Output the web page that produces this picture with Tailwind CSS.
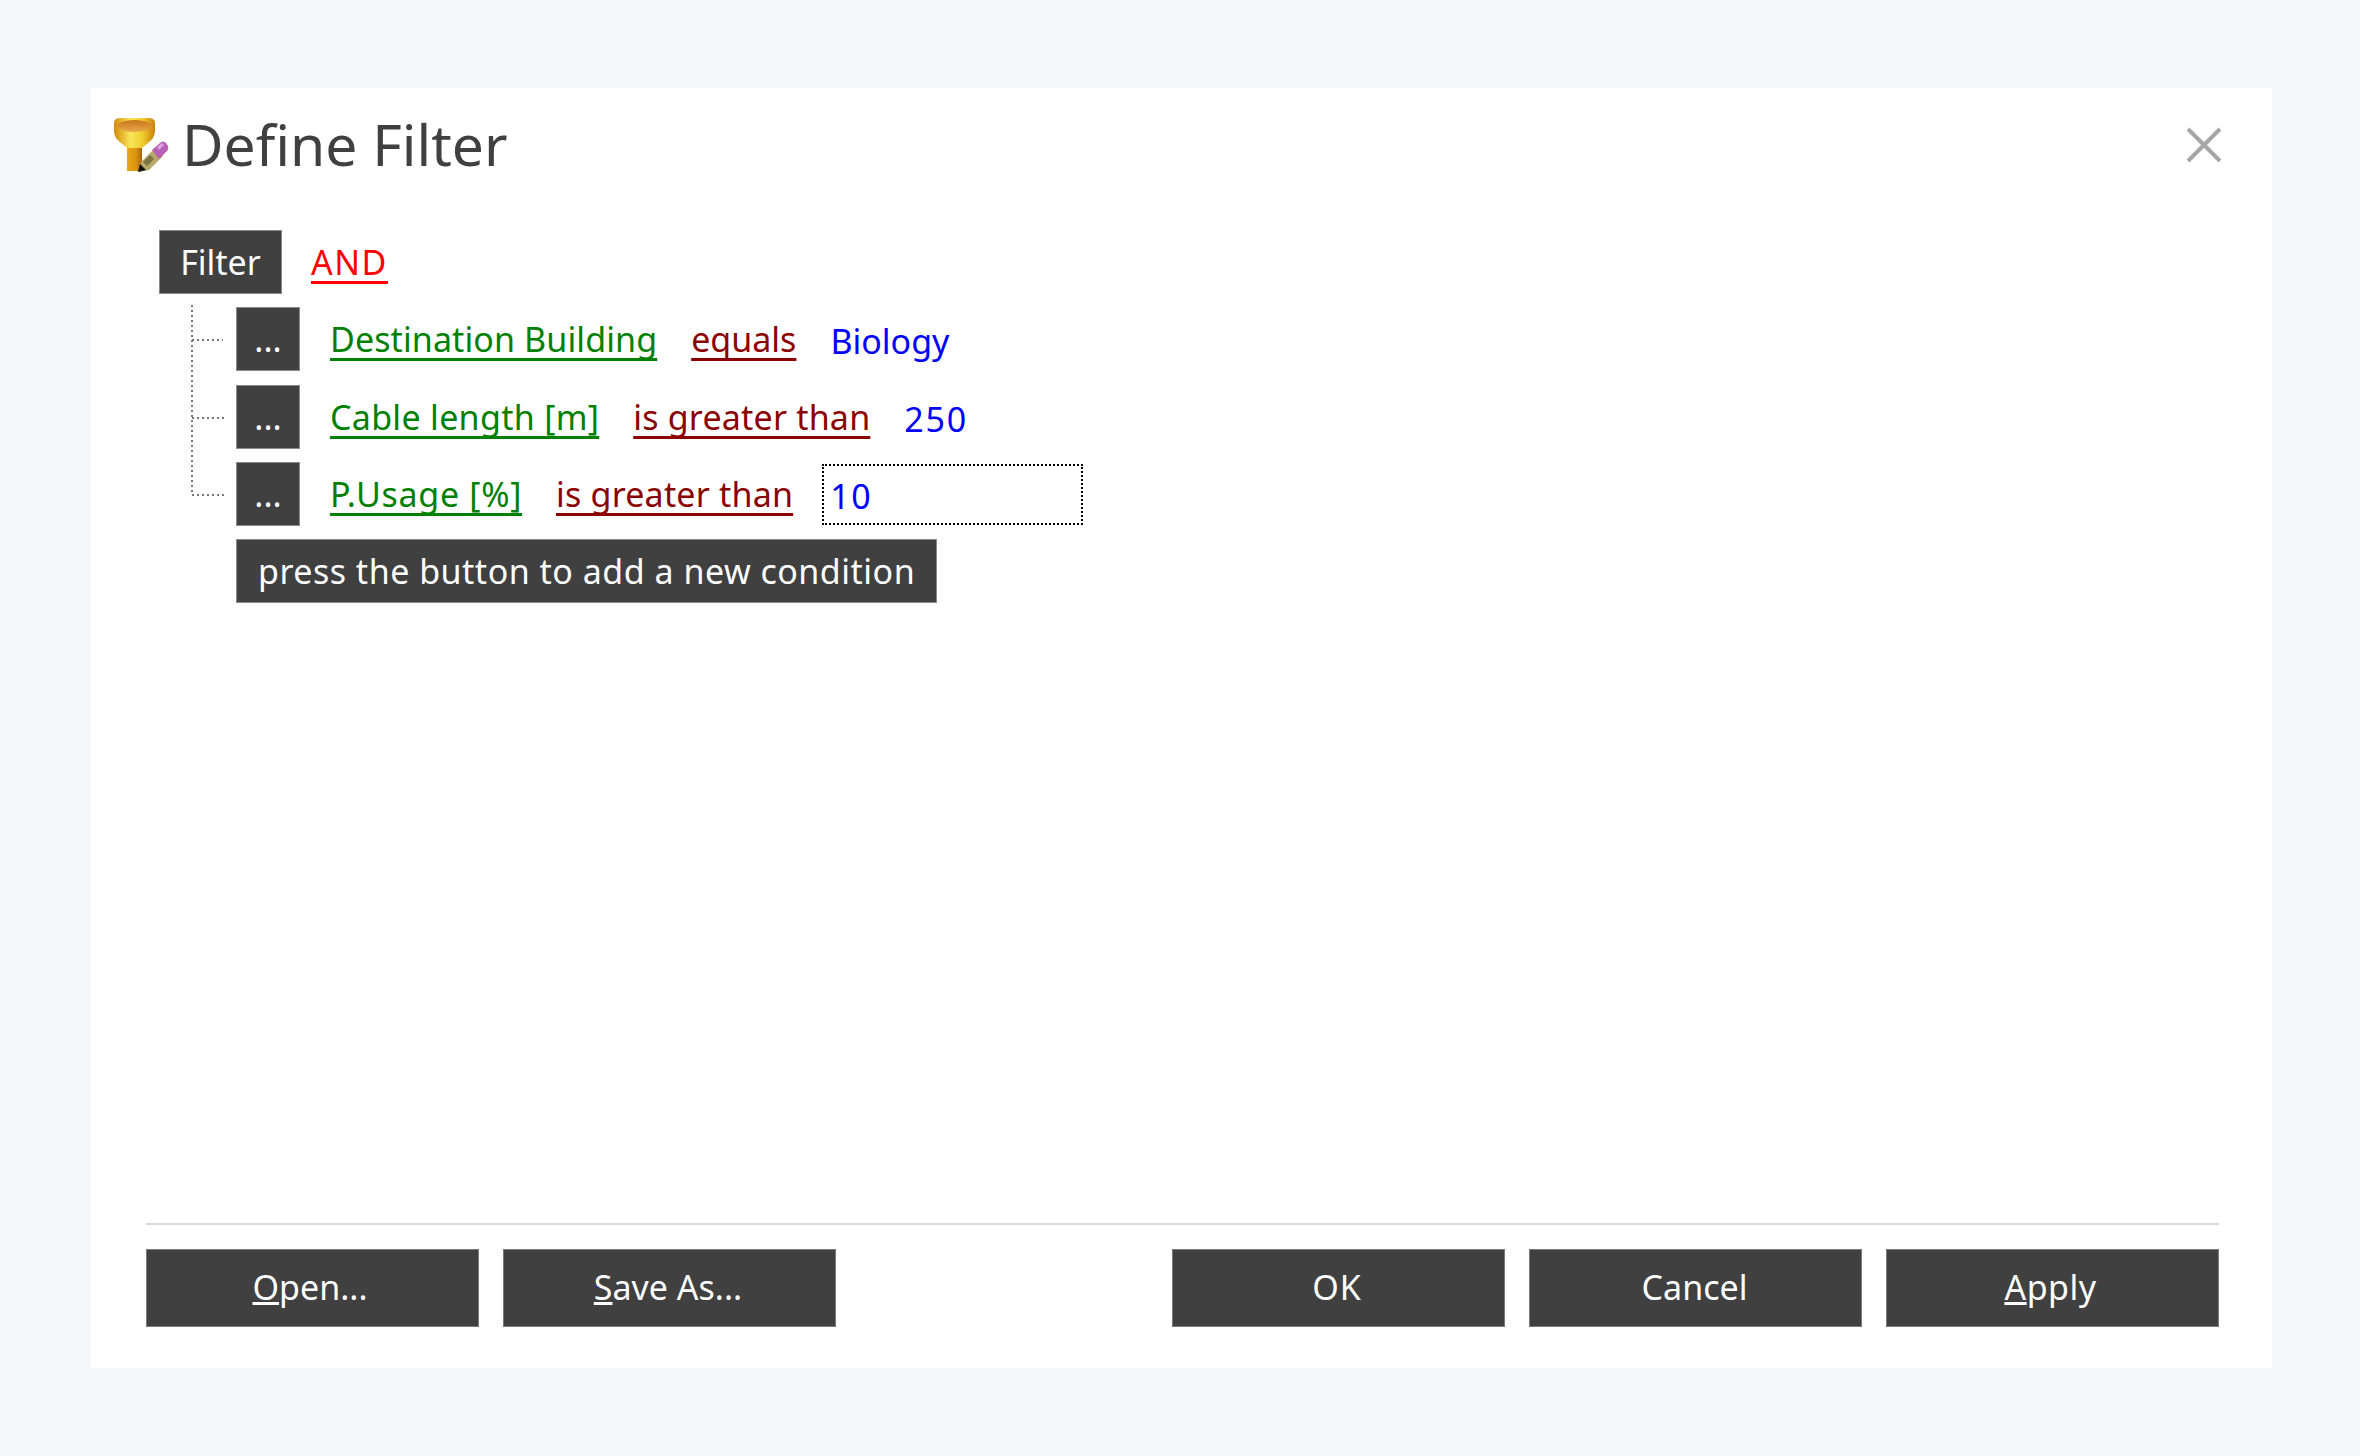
<!DOCTYPE html>
<html lang="en">
  <head>
    <meta charset="UTF-8" />
    <title>Define Filter</title>
    <script src="https://cdn.jsdelivr.net/npm/@tailwindcss/browser@4"></script>
  </head>
  <body class="bg-[#f4f6fa] min-h-screen pt-[88px] pl-[90px] font-['Noto_Sans','Open_Sans',sans-serif]">
    <div class="bg-white w-[2182px] h-[1280px] flex flex-col">
      <!-- title bar -->
      <div class="flex items-center h-[114px] pl-[23px] pr-[50px] shrink-0">
        <svg class="w-[56px] h-[56px] shrink-0 blur-[0.6px]" viewBox="0 0 56 56">
          <defs>
            <linearGradient id="funnel" x1="0" y1="0" x2="1" y2="0">
              <stop offset="0" stop-color="#d4890a" />
              <stop offset="0.4" stop-color="#f8e65a" />
              <stop offset="0.7" stop-color="#f0cc2c" />
              <stop offset="1" stop-color="#c9800a" />
            </linearGradient>
            <linearGradient id="stem" x1="0" y1="0" x2="1" y2="0">
              <stop offset="0" stop-color="#e8a818" />
              <stop offset="0.6" stop-color="#dc9410" />
              <stop offset="1" stop-color="#a8640a" />
            </linearGradient>
            <linearGradient id="rim" x1="0" y1="0" x2="0" y2="1">
              <stop offset="0" stop-color="#c8741c" />
              <stop offset="1" stop-color="#e8a848" />
            </linearGradient>
          </defs>
          <path d="M1 6 Q1 1 8 1 H35 Q42 1 42 6 V14 Q42 21 35 26 L29 31 V54 H14 V31 L8 26 Q1 21 1 14 Z" fill="url(#funnel)" />
          <path d="M14 31 H29 V54 H14 Z" fill="url(#stem)" />
          <ellipse cx="21.5" cy="9" rx="17" ry="6" fill="url(#rim)" />
          <path d="M25 55 L28 45 L42 31 L50 39 L36 53 Z" fill="#b8a868" />
          <path d="M25 55 L27 47 L33 53 Z" fill="#111" />
          <path d="M39 33 L47 26 Q50 23 53 26 L55 29 Q56 32 54 34 L46 42 Z" fill="#b85fb8" />
          <path d="M44 30 L49 26 L51 28 L46 33 Z" fill="#e0a0e0" />
          <path d="M30 45 L37 38 L41 42 L34 49 Z" fill="#7a7448" />
        </svg>
        <h1 class="ml-[13px] mb-[2px] text-[57px] text-[#404040] leading-none">Define Filter</h1>
        <svg class="w-[36px] h-[36px] ml-auto" viewBox="0 0 36 36">
          <path d="M2 2 L34 34 M34 2 L2 34" stroke="#a6a6a6" stroke-width="4" fill="none" />
        </svg>
      </div>

      <!-- filter tree -->
      <div class="grow pl-[69px] pt-[28px] text-[34px] leading-none">
        <div class="flex items-center h-[64px]">
          <div class="h-[64px] w-[123px] flex items-center justify-center bg-[#404040] border border-[#8a8a8a] text-white">Filter</div>
          <a class="ml-[29px] tracking-[1.5px] text-[#ff0000] underline decoration-[3px] underline-offset-[6px] [text-decoration-skip-ink:none]">AND</a>
        </div>
        <div class="flex mt-[13px]">
          <svg class="w-[77px] h-[220px] shrink-0 overflow-visible" viewBox="0 0 77 220">
            <path d="M33 -2 V188 H66 M33 33 H64 M33 111 H66" stroke="#777" stroke-width="2" stroke-dasharray="2 3" fill="none" />
          </svg>
          <div class="flex flex-col">
            <div class="flex items-center h-[64px]">
              <button class="w-[64px] h-[64px] bg-[#404040] border border-[#8a8a8a] text-white">...</button>
              <a class="ml-[30px] tracking-[0.1px] text-[#008000] underline decoration-[3px] underline-offset-[6px] [text-decoration-skip-ink:none]">Destination Building</a>
              <a class="ml-[34px] text-[#8b0000] underline decoration-[3px] underline-offset-[6px] [text-decoration-skip-ink:none]">equals</a>
              <span class="ml-[34px] mt-[3px] text-[#0000ff]">Biology</span>
            </div>
            <div class="flex items-center h-[64px] mt-[14px]">
              <button class="w-[64px] h-[64px] bg-[#404040] border border-[#8a8a8a] text-white">...</button>
              <a class="ml-[30px] tracking-[0.3px] text-[#008000] underline decoration-[3px] underline-offset-[6px] [text-decoration-skip-ink:none]">Cable length [m]</a>
              <a class="ml-[34px] tracking-[0.2px] text-[#8b0000] underline decoration-[3px] underline-offset-[6px] [text-decoration-skip-ink:none]">is greater than</a>
              <span class="ml-[34px] mt-[3px] tracking-[1.7px] text-[#0000ff]">250</span>
            </div>
            <div class="flex items-center h-[64px] mt-[13px]">
              <button class="w-[64px] h-[64px] bg-[#404040] border border-[#8a8a8a] text-white">...</button>
              <a class="ml-[30px] tracking-[0.7px] text-[#008000] underline decoration-[3px] underline-offset-[6px] [text-decoration-skip-ink:none]">P.Usage [%]</a>
              <a class="ml-[34px] tracking-[0.2px] text-[#8b0000] underline decoration-[3px] underline-offset-[6px] [text-decoration-skip-ink:none]">is greater than</a>
              <div class="ml-[29px] w-[261px] h-[61px] flex items-center pl-[6px] pt-[3px] tracking-[1.5px] border-2 border-dotted border-black text-[#0000ff]">10</div>
            </div>
            <div class="flex items-center h-[64px] w-[701px] mt-[13px] pl-[21px] tracking-[0.5px] bg-[#404040] border border-[#8a8a8a] text-white whitespace-nowrap">press the button to add a new condition</div>
          </div>
        </div>
      </div>

      <!-- footer -->
      <div class="ml-[56px] mr-[53px] shrink-0">
        <div class="h-[2px] bg-[#d9d9d9]"></div>
        <div class="flex mt-[24px] mb-[41px] text-[34px] leading-none text-white">
          <button class="w-[333px] h-[78px] pr-[5px] pb-[2px] bg-[#404040] border border-[#7a7a7a]"><span class="underline">O</span>pen...</button>
          <button class="w-[333px] h-[78px] pr-[3px] pb-[2px] ml-[24px] bg-[#404040] border border-[#7a7a7a]"><span class="underline">S</span>ave As...</button>
          <button class="w-[333px] h-[78px] pr-[3px] pb-[2px] ml-auto tracking-[1px] bg-[#404040] border border-[#7a7a7a]">OK</button>
          <button class="w-[333px] h-[78px] pr-[2px] pb-[2px] ml-[24px] bg-[#404040] border border-[#7a7a7a]">Cancel</button>
          <button class="w-[333px] h-[78px] pr-[4px] pb-[2px] ml-[24px] tracking-[0.5px] bg-[#404040] border border-[#7a7a7a]"><span class="underline">A</span>pply</button>
        </div>
      </div>
    </div>
  </body>
</html>
